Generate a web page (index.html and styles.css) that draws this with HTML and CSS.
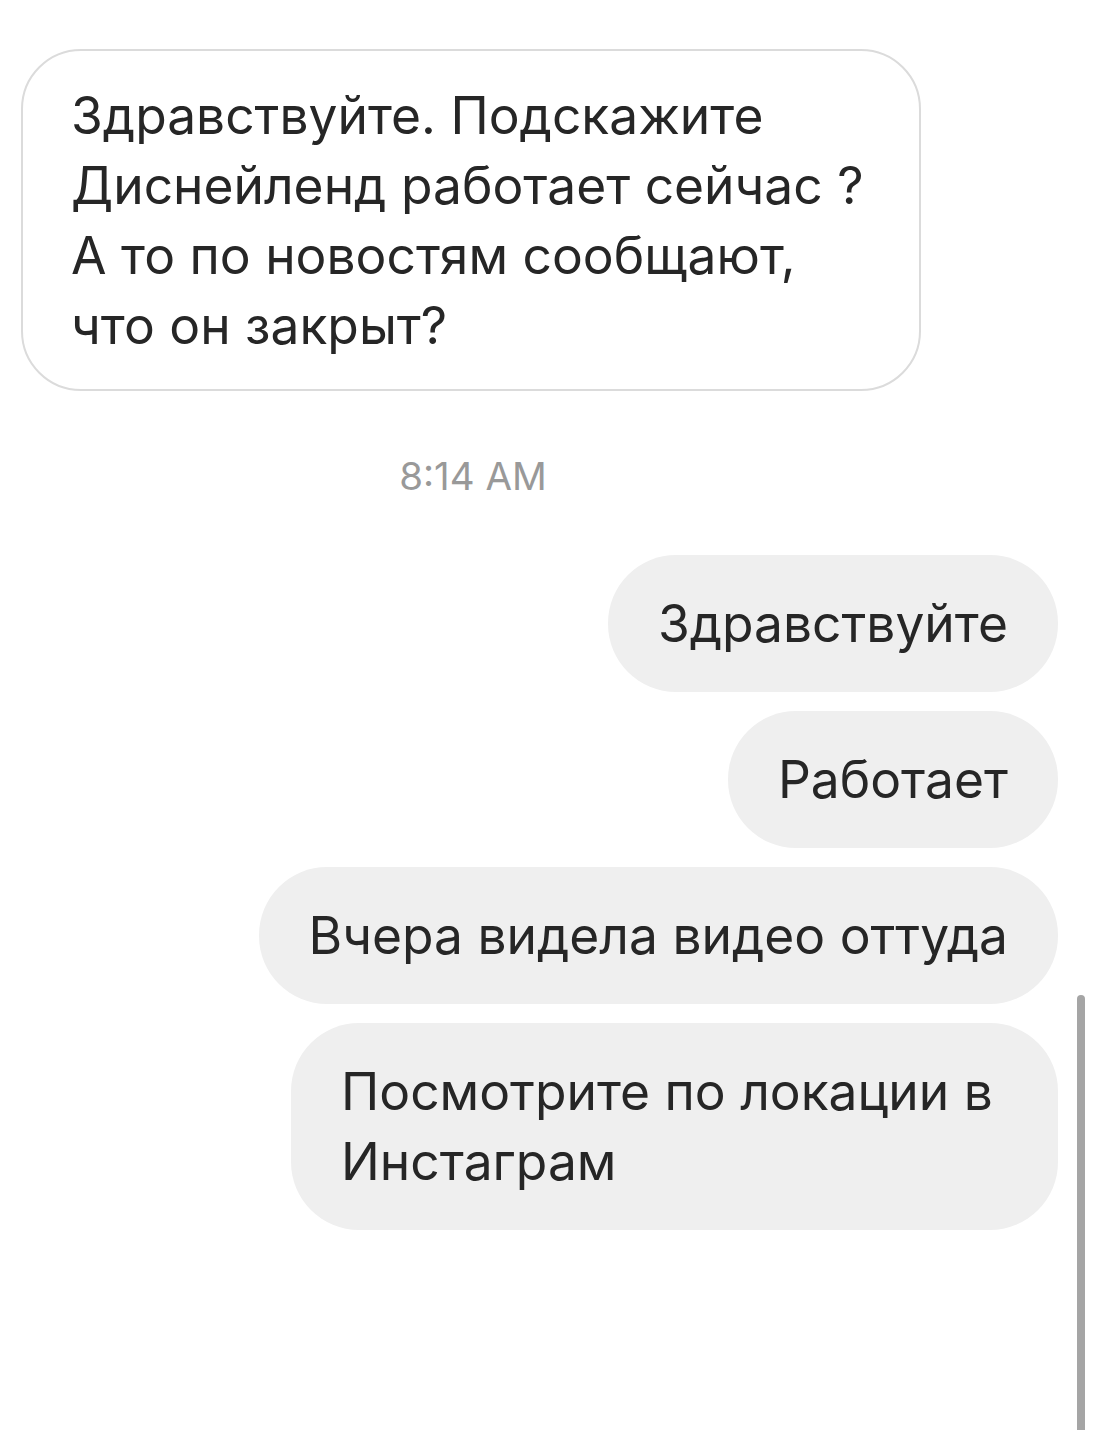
FILE: index.html
```html
<!DOCTYPE html>
<html lang="ru">
<head>
<meta charset="UTF-8">
<title>Direct</title>
<meta name="viewport" content="width=device-width, initial-scale=1.0">
<link rel="stylesheet" href="styles.css">
</head>
<body>
<div class="thread">
<div class="bubble in">Здравствуйте. Подскажите<br>Диснейленд работает сейчас ?<br>А то по новостям сообщают,<br>что он закрыт?</div>

<div class="time">8:14 AM</div>

<div class="bubble out">Здравствуйте</div>
<div class="bubble out">Работает</div>
<div class="bubble out">Вчера видела видео оттуда</div>
<div class="bubble out wide">Посмотрите по локации в<br>Инстаграм</div>
</div>

<div class="scrollbar"></div>
</body>
</html>
```

FILE: styles.css
```css
body {
margin: 0;
background: #fff;
color: #262626;
font-family: Inter, "Noto Sans", sans-serif;
}

.thread {
display: flex;
flex-direction: column;
padding: 49px 37px 0 21px;
}

.bubble {
font-size: 51.5px;
line-height: 70px;
box-sizing: border-box;
}

.in {
align-self: flex-start;
width: 900px;
padding: 29px 48px;
border: 2px solid #dbdbdb;
border-radius: 60px;
background: #fff;
}

.time {
width: 904px;
text-align: center;
color: #999;
font-size: 38.5px;
line-height: 50px;
margin: 60px 0 54px;
}

.out {
align-self: flex-end;
padding: 33px 50px 34px;
border-radius: 68px;
background: #efefef;
}

.out + .out {
margin-top: 19px;
}

.wide {
width: 767px;
}

/* overlay scroll indicator */
.scrollbar {
position: absolute;
left: 1077px;
top: 995px;
width: 8px;
height: 450px;
border-radius: 4px;
background: #a5a5a5;
}
```
